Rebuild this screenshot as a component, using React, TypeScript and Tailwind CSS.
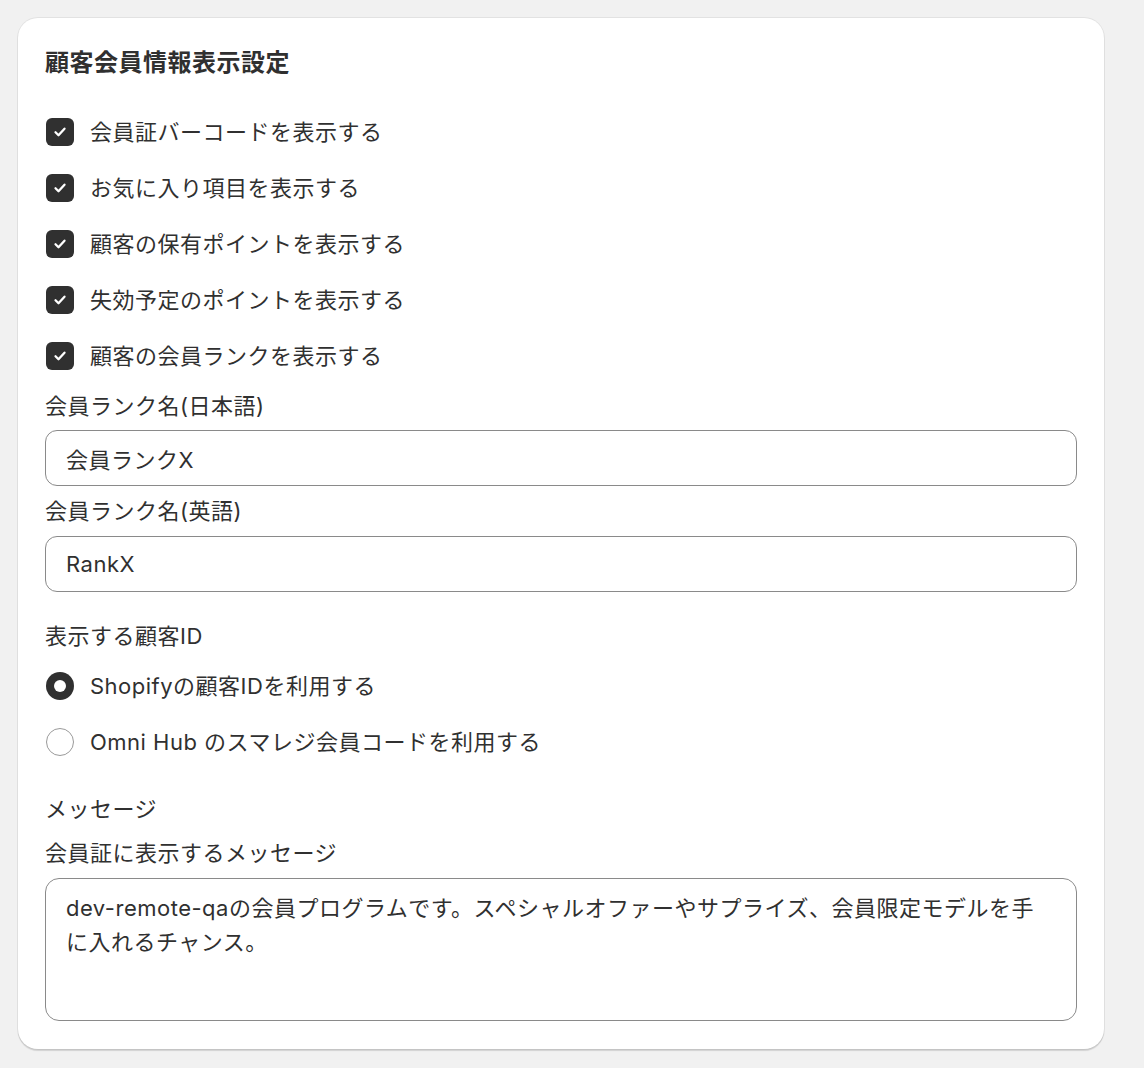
import { useState } from 'react'

const FONT = { fontFamily: 'Inter, "Noto Sans CJK JP", "Noto Sans", sans-serif' }

const CHECKS = [
  '会員証バーコードを表示する',
  'お気に入り項目を表示する',
  '顧客の保有ポイントを表示する',
  '失効予定のポイントを表示する',
  '顧客の会員ランクを表示する',
]

function Checkbox({ checked, label, onToggle }: { checked: boolean; label: string; onToggle: () => void }) {
  return (
    <label className="h-[56px] flex items-center gap-4 cursor-pointer" onClick={onToggle}>
      <span className={`w-7 h-7 rounded-[6px] flex items-center justify-center flex-shrink-0 ml-px ${checked ? 'bg-[#303030]' : 'border border-[#8a8a8a] bg-white'}`}>
        {checked && (
          <svg viewBox="0 0 20 20" className="w-[20px] h-[20px]" fill="none">
            <path d="M5.5 10.3l3 3 6-6.6" stroke="white" strokeWidth="2.3" strokeLinecap="round" strokeLinejoin="round" />
          </svg>
        )}
      </span>
      <span className="text-[22px] leading-[34px] text-[#303030]">{label}</span>
    </label>
  )
}

function Radio({ checked, label, onSelect }: { checked: boolean; label: string; onSelect: () => void }) {
  return (
    <label className="h-[56px] flex items-center gap-4 cursor-pointer" onClick={onSelect}>
      <span className={`w-7 h-7 rounded-full flex items-center justify-center flex-shrink-0 ml-px ${checked ? 'bg-[#303030]' : 'border border-[#9a9a9a] bg-white'}`}>
        {checked && <span className="w-3 h-3 rounded-full bg-white" />}
      </span>
      <span className="text-[22px] leading-[34px] text-[#303030]">{label}</span>
    </label>
  )
}

export default function App() {
  const [checks, setChecks]     = useState([true, true, true, true, true])
  const [idMode, setIdMode]     = useState<'shopify' | 'omni'>('shopify')
  const [rankJa, setRankJa]     = useState('会員ランクX')
  const [rankEn, setRankEn]     = useState('RankX')
  const [message, setMessage]   = useState('dev-remote-qaの会員プログラムです。スペシャルオファーやサプライズ、会員限定モデルを手に入れるチャンス。')

  return (
    <div className="min-h-screen bg-[#f1f1f1] pt-[18px] pl-[18px] pr-[40px] pb-[19px] tracking-[0.5px]" style={FONT}>
      <div className="w-[1086px] bg-white rounded-[20px] shadow-[0_2px_1px_0_rgba(0,0,0,0.13),0_0_0_1px_rgba(0,0,0,0.06)] px-[27px] pt-[27px] pb-[28px] text-[#303030]">
        <h2 className="text-[24px] leading-[36px] font-bold">顧客会員情報表示設定</h2>

        <div className="mt-[23px]">
          {CHECKS.map((c, i) => (
            <Checkbox
              key={c}
              label={c}
              checked={checks[i]}
              onToggle={() => setChecks(checks.map((v, j) => (j === i ? !v : v)))}
            />
          ))}
        </div>

        <p className="mt-[5px] text-[22px] leading-[34px]">会員ランク名(日本語)</p>
        <input
          value={rankJa}
          onChange={e => setRankJa(e.target.value)}
          className="mt-[7px] w-full h-[56px] rounded-[12px] border border-[#8a8a8a] px-[20px] text-[22px] tracking-[0.5px] text-[#303030] outline-none"
        />

        <p className="mt-[8px] text-[22px] leading-[34px]">会員ランク名(英語)</p>
        <input
          value={rankEn}
          onChange={e => setRankEn(e.target.value)}
          className="mt-[8px] w-full h-[56px] rounded-[12px] border border-[#8a8a8a] px-[20px] text-[22px] tracking-[0.5px] text-[#303030] outline-none"
        />

        <p className="mt-[27px] text-[22px] leading-[34px]">表示する顧客ID</p>
        <div className="mt-[5px]">
          <Radio label="Shopifyの顧客IDを利用する" checked={idMode === 'shopify'} onSelect={() => setIdMode('shopify')} />
          <Radio label="Omni Hub のスマレジ会員コードを利用する" checked={idMode === 'omni'} onSelect={() => setIdMode('omni')} />
        </div>

        <p className="mt-[22px] text-[22px] leading-[34px]">メッセージ</p>
        <p className="mt-[10px] text-[22px] leading-[34px]">会員証に表示するメッセージ</p>
        <textarea
          value={message}
          onChange={e => setMessage(e.target.value)}
          className="mt-[8px] block w-full h-[143px] resize-none rounded-[14px] border border-[#8a8a8a] px-[20px] py-[12px] text-[22px] leading-[34px] tracking-[0.5px] text-[#303030] outline-none"
        />
      </div>
    </div>
  )
}
